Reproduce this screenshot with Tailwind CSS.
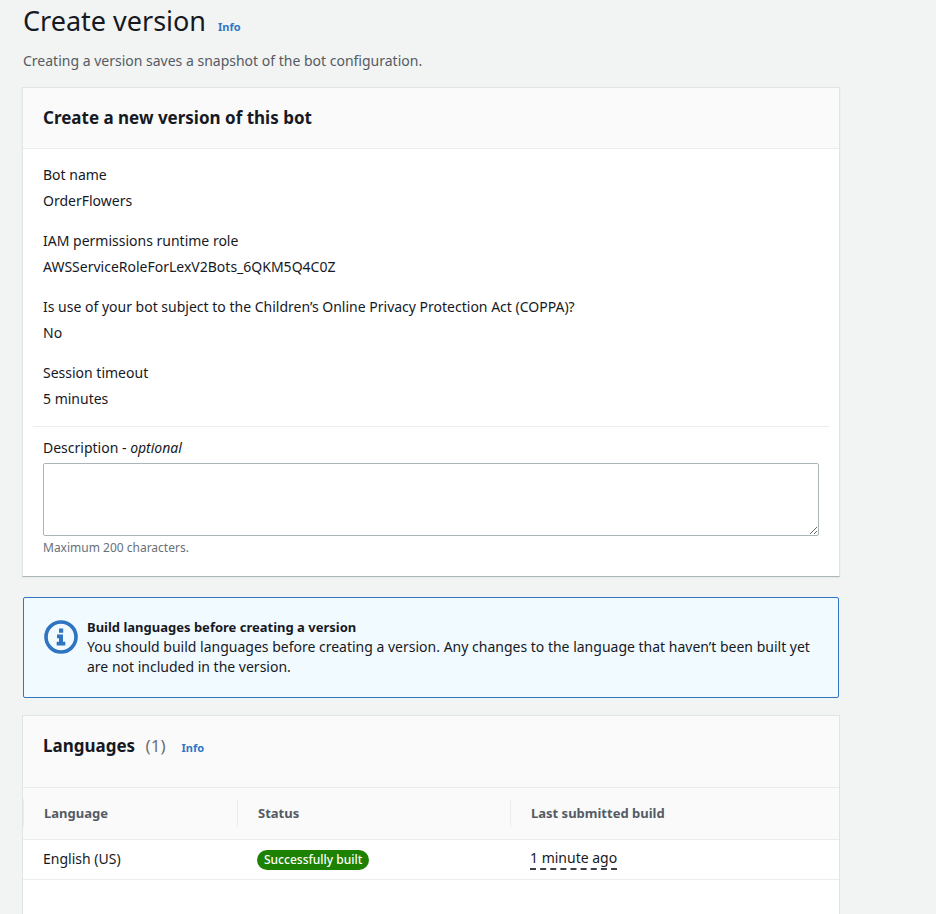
<!DOCTYPE html>
<html lang="en">
<head>
  <meta charset="UTF-8" />
  <meta name="viewport" content="width=device-width, initial-scale=1.0"/>
  <title>Create version</title>
  <script src="https://cdn.jsdelivr.net/npm/@tailwindcss/browser@4"></script>
</head>
<body class="bg-[#f2f3f3] text-[#16191f] font-['Noto_Sans',sans-serif] text-[14px] leading-5 overflow-x-hidden">
  <main class="flex flex-col min-h-screen pl-[22px] pr-24 pt-[3px]">
    <div class="flex items-baseline gap-3 pl-px">
      <h1 class="text-[27px] leading-9">Create version</h1>
      <a href="#" class="text-[11px] font-bold text-[#2f77c5]">Info</a>
    </div>
    <p class="mt-3 pl-px text-[#545b64]">Creating a version saves a snapshot of the bot configuration.</p>

    <!-- Version details -->
    <section class="mt-4 bg-white border border-[#dfe4e4] border-b-[#aab7b8] shadow-xs">
      <header class="bg-[#fafafa] border-b border-[#eaeded] px-5 py-[18px]">
        <h2 class="text-[17px] leading-6 font-bold">Create a new version of this bot</h2>
      </header>
      <dl class="flex flex-col gap-5 px-5 pt-4 pb-[17px]">
        <div class="flex flex-col gap-1.5">
          <dt>Bot name</dt>
          <dd>OrderFlowers</dd>
        </div>
        <div class="flex flex-col gap-1.5">
          <dt>IAM permissions runtime role</dt>
          <dd>AWSServiceRoleForLexV2Bots_6QKM5Q4C0Z</dd>
        </div>
        <div class="flex flex-col gap-1.5">
          <dt>Is use of your bot subject to the Children’s Online Privacy Protection Act (COPPA)?</dt>
          <dd>No</dd>
        </div>
        <div class="flex flex-col gap-1.5">
          <dt>Session timeout</dt>
          <dd>5 minutes</dd>
        </div>
      </dl>
      <div class="mx-[10px] px-[10px] pt-[11px] pb-5 border-t border-[#eaeded]">
        <label for="description" class="block">Description - <i>optional</i></label>
        <textarea id="description" class="block w-full h-[73px] mt-[5px] px-2 py-1 bg-white border border-[#aab7b8] rounded-xs"></textarea>
        <p class="mt-1 text-[12px] leading-4 text-[#687078]">Maximum 200 characters.</p>
      </div>
    </section>

    <!-- Info alert -->
    <section class="flex gap-[9px] mt-5 mx-px px-5 pt-[19px] pb-5 bg-[#f1faff] border border-[#2f77c5] rounded-xs">
      <svg class="size-[34px] mt-[3px] shrink-0" viewBox="0 0 34 34" fill="none">
        <circle cx="17" cy="17" r="15" stroke="#2f74c0" stroke-width="3.6"/>
        <path d="M15 8.5h4.2v4.2H15zM13 14.6h6v7.2h2.3v3.6h-8.6v-3.6H15v-3.6h-2z" fill="#2f74c0"/>
      </svg>
      <div>
        <h3 class="text-[13px] leading-5 font-bold">Build languages before creating a version</h3>
        <p>You should build languages before creating a version. Any changes to the language that haven’t been built yet are not included in the version.</p>
      </div>
    </section>

    <!-- Languages -->
    <section class="flex-1 mt-[17px] bg-white border border-b-0 border-[#dfe4e4]">
      <header class="flex items-baseline bg-[#fafafa] border-b border-[#eaeded] px-5 pt-[18px] pb-[29px]">
        <h2 class="text-[17px] leading-6 font-bold">Languages <span class="ml-1.5 font-normal text-[#687078]">(1)</span></h2>
        <a href="#" class="ml-4 text-[11px] font-bold text-[#2f77c5]">Info</a>
      </header>
      <table class="w-full table-fixed text-left">
        <thead class="bg-[#fafafa] text-[13px] leading-5 text-[#545b64]">
          <tr class="border-b border-[#eaeded]">
            <th class="w-[214px] h-[51px] p-0"><div class="px-5 py-1 border-l border-[#eaeded]">Language</div></th>
            <th class="w-[273px] p-0"><div class="px-5 py-1 border-l border-[#eaeded]">Status</div></th>
            <th class="p-0"><div class="px-5 py-1 border-l border-[#eaeded]">Last submitted build</div></th>
          </tr>
        </thead>
        <tbody>
          <tr class="border-b border-[#eaeded]">
            <td class="h-10 px-5 py-0">English (US)</td>
            <td class="px-5 py-0"><span class="inline-block px-[7px] rounded-full bg-[#1d8102] text-white text-[12px] leading-5 font-medium">Successfully built</span></td>
            <td class="px-5 py-0"><button type="button" class="border-b-2 border-dashed border-[#3c4148]">1 minute ago</button></td>
          </tr>
        </tbody>
      </table>
    </section>
  </main>
</body>
</html>
